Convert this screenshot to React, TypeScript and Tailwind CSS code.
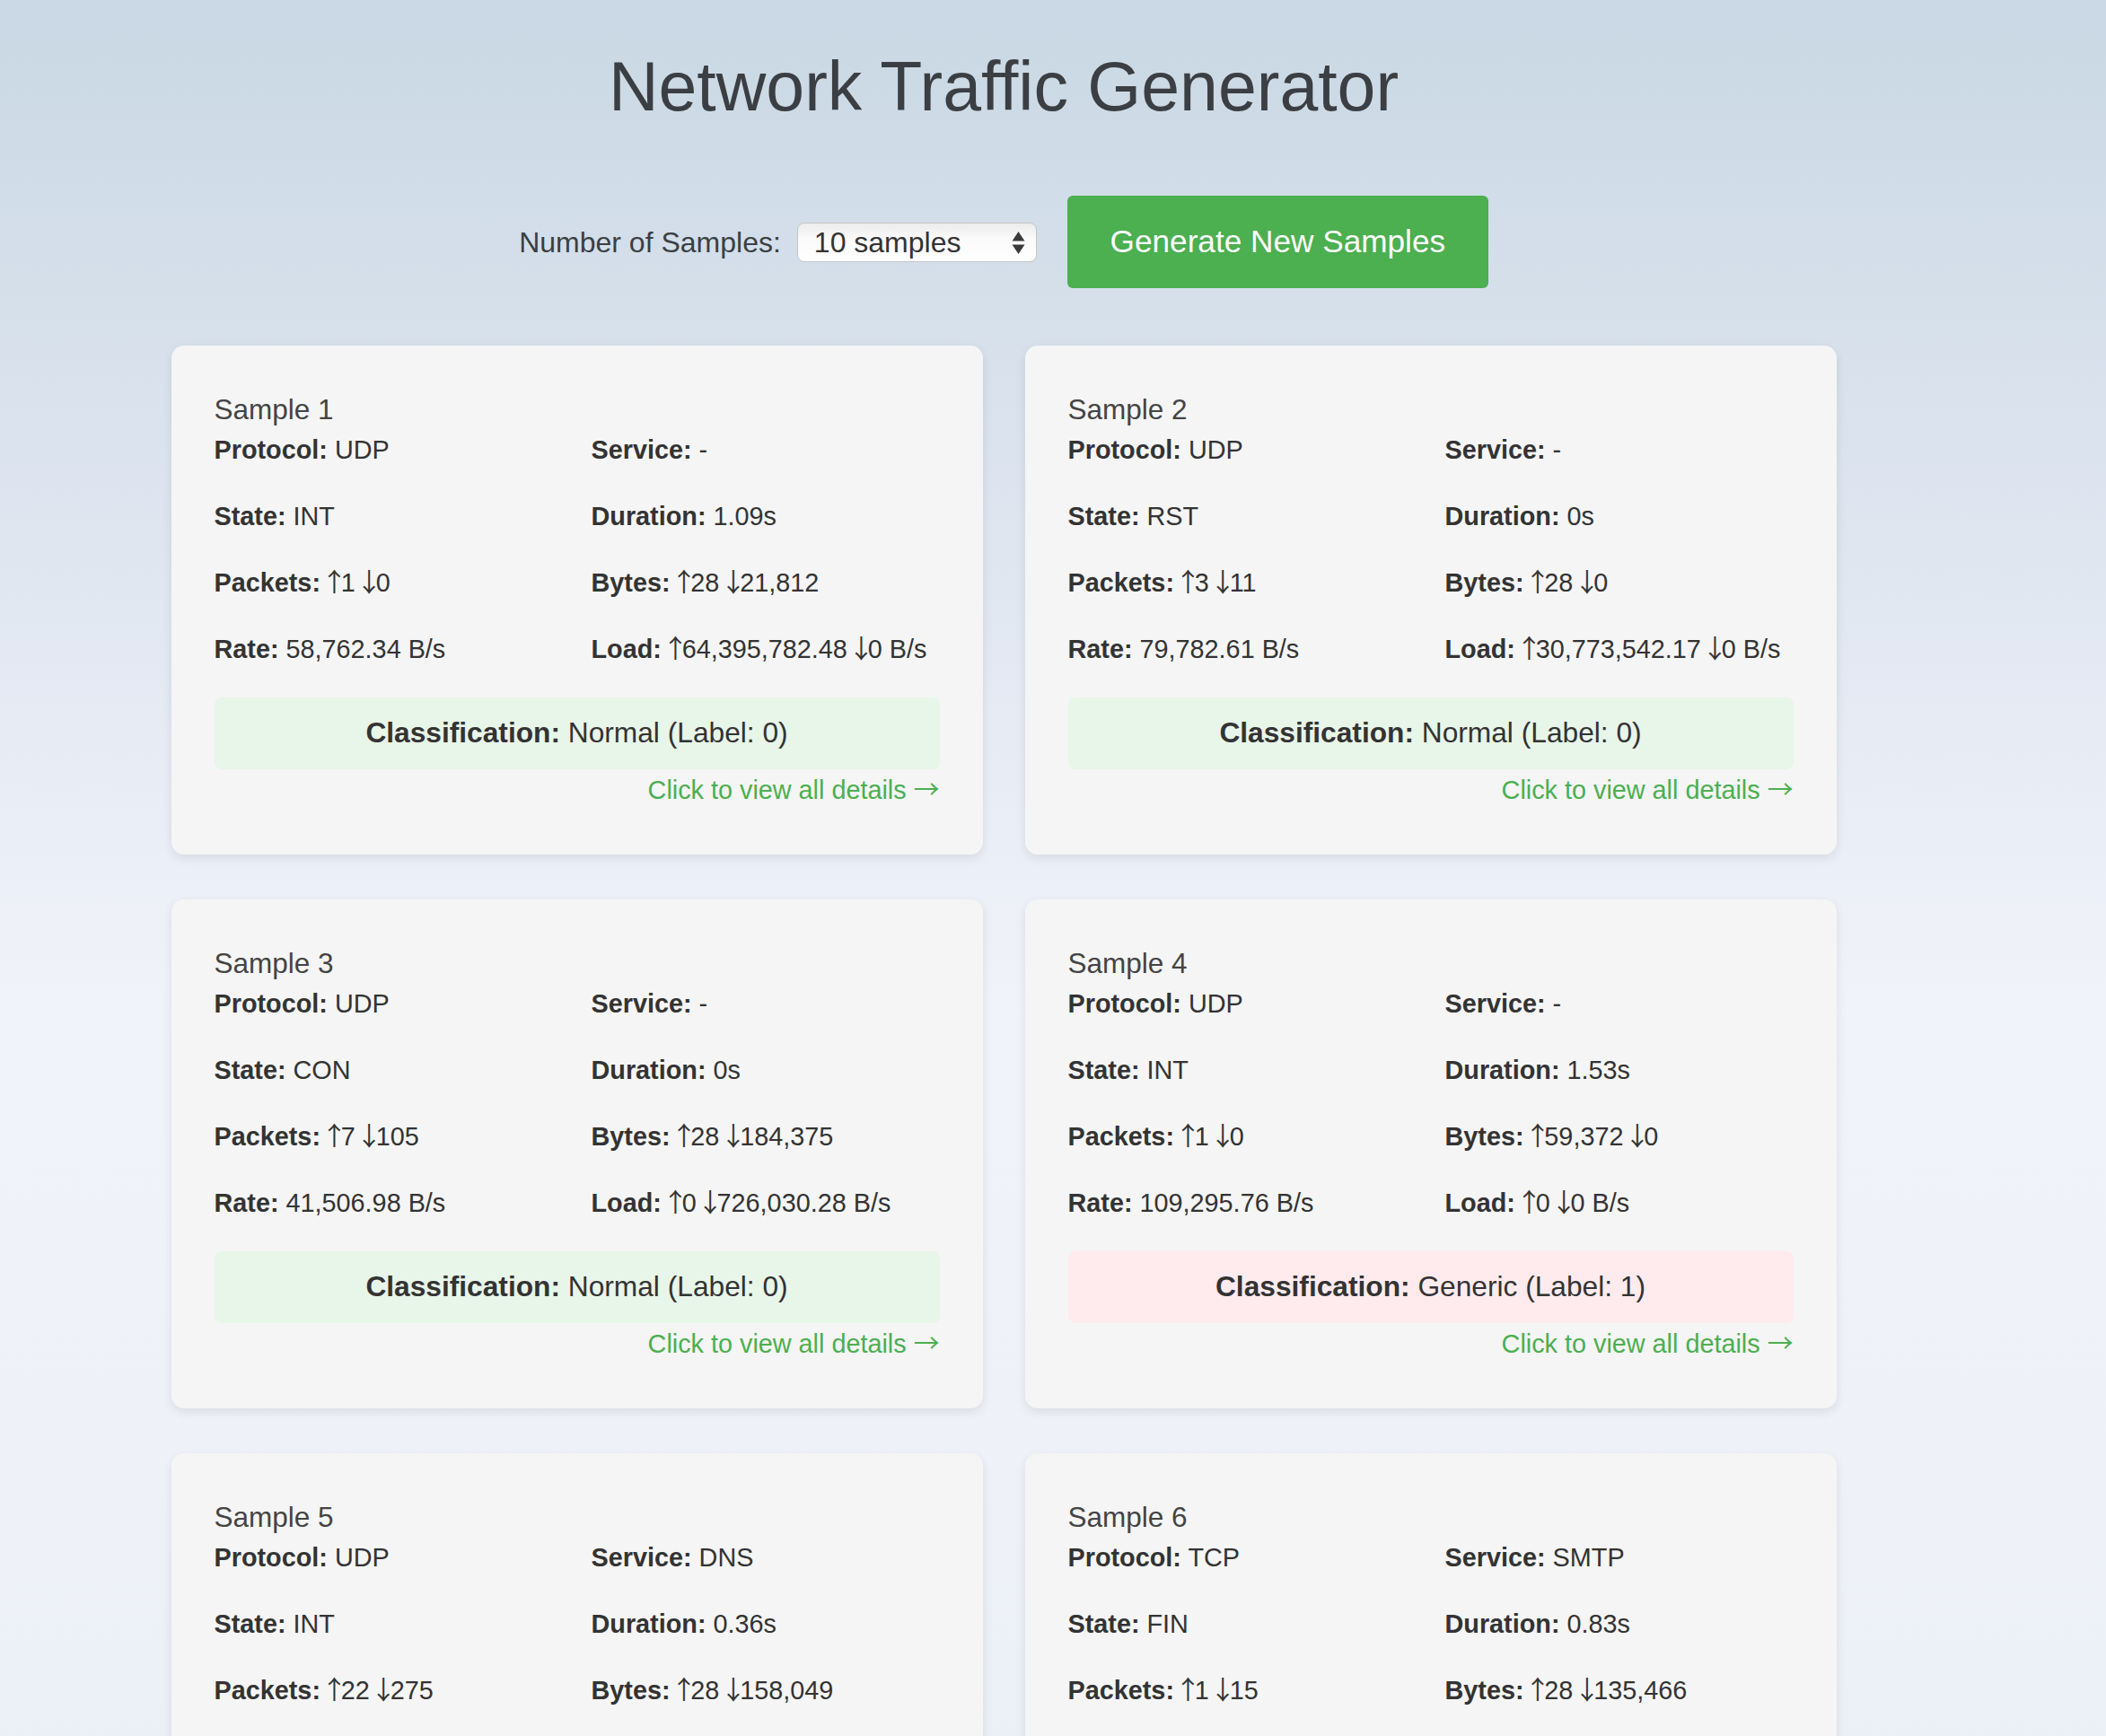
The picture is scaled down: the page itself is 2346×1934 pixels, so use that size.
import React from "react";

type Sample = {
  protocol: string;
  service: string;
  state: string;
  duration: string;
  packets: [string, string];
  bytes: [string, string];
  rate: string;
  load: [string, string];
  cls: string;
  label: number;
};

const samples: Sample[] = [
  { protocol: "UDP", service: "-", state: "INT", duration: "1.09s", packets: ["1", "0"], bytes: ["28", "21,812"], rate: "58,762.34", load: ["64,395,782.48", "0"], cls: "Normal", label: 0 },
  { protocol: "UDP", service: "-", state: "RST", duration: "0s", packets: ["3", "11"], bytes: ["28", "0"], rate: "79,782.61", load: ["30,773,542.17", "0"], cls: "Normal", label: 0 },
  { protocol: "UDP", service: "-", state: "CON", duration: "0s", packets: ["7", "105"], bytes: ["28", "184,375"], rate: "41,506.98", load: ["0", "726,030.28"], cls: "Normal", label: 0 },
  { protocol: "UDP", service: "-", state: "INT", duration: "1.53s", packets: ["1", "0"], bytes: ["59,372", "0"], rate: "109,295.76", load: ["0", "0"], cls: "Generic", label: 1 },
  { protocol: "UDP", service: "DNS", state: "INT", duration: "0.36s", packets: ["22", "275"], bytes: ["28", "158,049"], rate: "62,114.05", load: ["0", "1,204,871.33"], cls: "Normal", label: 0 },
  { protocol: "TCP", service: "SMTP", state: "FIN", duration: "0.83s", packets: ["1", "15"], bytes: ["28", "135,466"], rate: "18,072.29", load: ["269.88", "1,305,696.39"], cls: "Normal", label: 0 },
];

const cjk = { fontFamily: '"Noto Sans CJK JP", "Liberation Sans", sans-serif' };

function Up() {
  return (
    <span className="mx-[-7px] leading-[0]" style={cjk}>
      ↑
    </span>
  );
}
function Down() {
  return (
    <span className="mx-[-7px] leading-[0]" style={cjk}>
      ↓
    </span>
  );
}

function Field({ label, children }: { label: string; children: React.ReactNode }) {
  return (
    <div className="leading-[34px] text-[28.8px] text-[#333] whitespace-nowrap">
      <span className="font-bold">{label}:</span> {children}
    </div>
  );
}

function Card({ s, i }: { s: Sample; i: number }) {
  const normal = s.label === 0;
  return (
    <div className="bg-[#f5f5f5] rounded-[14px] shadow-[0_4px_12px_rgba(0,0,0,0.09)] px-12 pt-12 pb-[55px]">
      <div className="mt-[4px] mb-[9px] text-[31.5px] leading-[38px] text-[#444]">Sample {i + 1}</div>
      <div className="grid grid-cols-2 gap-x-8 gap-y-10">
        <Field label="Protocol">{s.protocol}</Field>
        <Field label="Service">{s.service}</Field>
        <Field label="State">{s.state}</Field>
        <Field label="Duration">{s.duration}</Field>
        <Field label="Packets">
          <Up />{s.packets[0]} <Down />{s.packets[1]}
        </Field>
        <Field label="Bytes">
          <Up />{s.bytes[0]} <Down />{s.bytes[1]}
        </Field>
        <Field label="Rate">{s.rate} B/s</Field>
        <Field label="Load">
          <Up />{s.load[0]} <Down />{s.load[1]} B/s
        </Field>
      </div>
      <div
        className={
          "mt-[37px] h-[80px] rounded-[8px] flex items-center justify-center text-[31.7px] text-[#333] " +
          (normal ? "bg-[#e8f5e9]" : "bg-[#ffebee]")
        }
      >
        <span className="font-bold">Classification:</span>
        <span>&nbsp;{s.cls} (Label: {s.label})</span>
      </div>
      <div className="mt-[6px] text-right text-[28.8px] leading-[34px] text-[#4caf50]">
        Click to view all details{" "}
        <span className="leading-[0]" style={cjk}>
          →
        </span>
      </div>
    </div>
  );
}

export default function App() {
  return (
    <div
      className="min-h-screen w-full bg-[linear-gradient(180deg,#c9d8e4_0%,#dbe3ee_22%,#f1f3fa_50%,#eef1f8_75%,#e9edf5_100%)] pt-[51px] pb-16"
      style={{ fontFamily: '"Liberation Sans", Arial, Helvetica, sans-serif' }}
    >
      <div className="w-[2236px]">
        <h1 className="text-center text-[77px] leading-[91px] font-normal text-[#3b3f43]">Network Traffic Generator</h1>
        <div className="mt-[76px] flex items-center justify-center">
          <label className="text-[32px] text-[#3b3f43]">Number of Samples:</label>
          <div className="relative ml-[18px]">
            <select
              defaultValue="10"
              className="appearance-none w-[267px] h-[44px] rounded-[8px] border border-[#c6c6c6] bg-[linear-gradient(180deg,#ececec_0%,#fafafa_40%,#ffffff_100%)] pl-[18px] text-[32px] leading-[40px] text-[#333] outline-none"
              style={{ fontFamily: '"Liberation Sans", Arial, sans-serif' }}
            >
              <option value="5">5 samples</option>
              <option value="10">10 samples</option>
              <option value="20">20 samples</option>
            </select>
            <svg className="absolute right-[13px] top-[9px] pointer-events-none" width="15" height="27" viewBox="0 0 15 27">
              <polygon points="7.5,1 14.5,11.5 0.5,11.5" fill="#3a3a3a" />
              <polygon points="0.5,15.5 14.5,15.5 7.5,26" fill="#3a3a3a" />
            </svg>
          </div>
          <button className="ml-[34px] h-[103px] w-[469px] rounded-[6px] bg-[#4caf50] text-white text-[35.2px]">
            Generate New Samples
          </button>
        </div>
        <div className="mx-auto mt-[64px] w-[1855px] grid grid-cols-2 gap-x-[47px] gap-y-[50px]">
          {samples.map((s, i) => (
            <Card key={i} s={s} i={i} />
          ))}
        </div>
      </div>
    </div>
  );
}
